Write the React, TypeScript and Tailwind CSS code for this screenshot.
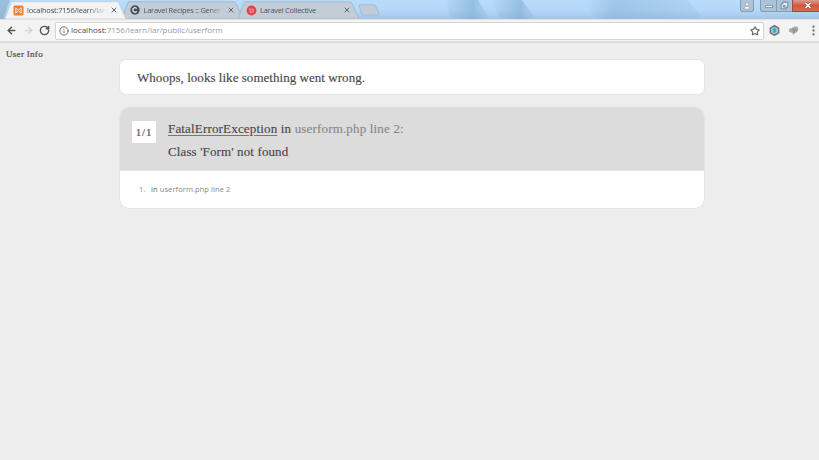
import React from "react";
import { Star, X, ArrowLeft, ArrowRight, RotateCw, Info, EllipsisVertical } from "lucide-react";

const sans = "font-['Open_Sans','Noto_Sans',sans-serif]";
const serif = "font-['Liberation_Serif',serif]";

type TabProps = {
  title: string;
  icon: React.ReactNode;
  shape: string;
  edge: string;
  text: string;
};

function Tab({ title, icon, shape, edge, text }: TabProps) {
  return (
    <div className={"relative flex h-[18px] w-[121px] shrink-0 items-center pl-[7px] " + shape}>
      <svg className="absolute inset-0 h-full w-full" viewBox="0 0 121 18" preserveAspectRatio="none">
        <path d="M0 18 L6 1.6 Q6.5 .8 7.5 .8 H112 Q113 .8 113.5 1.6 L121 18 Z" className={edge} strokeWidth=".6" />
      </svg>
      <div className="relative ml-[1px] flex h-[11px] w-[11px] items-center justify-center">{icon}</div>
      <span className={"relative ml-[3px] w-[80px] whitespace-nowrap text-[7.5px] leading-[15px] " + text}>
        {title}
      </span>
      <X className="relative ml-[3px] h-[8px] w-[8px] shrink-0 text-[#60666d]" strokeWidth={3} />
    </div>
  );
}

function WindowButtons() {
  return (
    <div className="ml-auto flex h-[12px] text-[#fff]">
      <div className="mr-[6px] flex w-[14px] items-center justify-center rounded-b-[3px] border border-t-0 border-[#849bb1] bg-[#adc4d9]">
        <svg width="8" height="8" viewBox="0 0 8 8" fill="#fff" stroke="#71879b" strokeWidth=".5">
          <circle cx="4" cy="2.3" r="1.6" />
          <path d="M1 7 Q1 4.2 4 4.2 Q7 4.2 7 7 Z" />
        </svg>
      </div>
      <div className="flex w-[17px] items-center justify-center rounded-bl-[3px] border border-t-0 border-[#849bb1] bg-[#abc3d8]">
        <span className="mt-[2px] h-[3px] w-[8px] border border-[#8799aa] bg-white" />
      </div>
      <div className="flex w-[15px] items-center justify-center border-b border-[#849bb1] bg-[#abc3d8]">
        <svg width="9" height="9" viewBox="0 0 8 8" fill="none">
          <path d="M2.5 1 H7 V5.5 H5.5 V7 H1 V2.5 H2.5 Z" fill="#e9eff5" stroke="#657788" strokeWidth=".8" />
          <path d="M3 4 H4.5 V5.5 H3 Z" stroke="#657788" strokeWidth=".8" />
        </svg>
      </div>
      <div className="flex w-[27px] items-center justify-center border-b border-l border-[#9d4b48] bg-gradient-to-b from-[#dc9a8e] via-[#d0573f] to-[#d76c52] pl-[3px]">
        <svg width="8" height="7" viewBox="0 0 8 7">
          <path d="M1.5 1 L6.5 6 M6.5 1 L1.5 6" stroke="#783f3e" strokeWidth="2.8" />
          <path d="M1.5 1 L6.5 6 M6.5 1 L1.5 6" stroke="#fff" strokeWidth="1.6" />
        </svg>
      </div>
    </div>
  );
}

function TabStrip() {
  return (
    <header className="relative flex h-[19px] bg-gradient-to-b from-[#b9dcfb] via-[#b4d8f8] to-[#a6c5e7] pl-[5px]">
      <svg className="absolute inset-0" width="819" height="19" viewBox="0 0 819 19">
        <defs>
          <linearGradient id="streak">
            <stop offset="0" stopColor="#78a8cb" stopOpacity="0" />
            <stop offset=".65" stopColor="#78a8cb" stopOpacity=".55" />
            <stop offset="1" stopColor="#78a8cb" stopOpacity=".05" />
          </linearGradient>
          <linearGradient id="sheen">
            <stop offset="0" stopColor="#78a8cb" stopOpacity="0" />
            <stop offset=".25" stopColor="#78a8cb" stopOpacity=".4" />
            <stop offset="1" stopColor="#78a8cb" stopOpacity=".12" />
          </linearGradient>
        </defs>
        <path d="M442 0 H478 L490 19 H452 Z" fill="url(#streak)" />
        <path d="M490 0 H522 L536 19 H500 Z" fill="url(#streak)" />
        <path d="M585 0 H688 L703 19 H595 Z" fill="url(#sheen)" />
        <path d="M0 0 H10 L3 19 H0 Z" fill="#799bb6" opacity=".45" />
      </svg>
      <div className="relative flex items-end">
        <Tab
          title="localhost:7156/learn/lar"
          shape="z-10"
          edge="fill-[#f3f3f3] stroke-[#bdc8d4]"
          text="text-[#4f4f4f] tracking-[-0.22px] mask-r-from-75%"
          icon={
            <svg width="11" height="11" viewBox="0 0 11 11">
              <rect x=".5" y=".5" width="10" height="10" rx="1.5" fill="#ef7d38" />
              <path d="M2.6 2.7 L5.2 5.3 L8.3 2.7 M2.6 8.4 L5.2 5.6 L8.3 8.4 M2.8 3 V8 M8.2 3 V8" stroke="#fff0e5" strokeWidth=".9" fill="none" />
            </svg>
          }
        />
        <Tab
          title="Laravel Recipes :: Gener"
          shape="-ml-[4.5px]"
          edge="fill-[#c2cdd8] stroke-[#98a8b8]"
          text="text-[#4b545f] tracking-[-0.25px] mask-r-from-80%"
          icon={
            <svg width="10" height="10" viewBox="0 0 10 10">
              <circle cx="5" cy="5" r="4.7" fill="#46515b" />
              <path d="M6.8 3.5 L5 2.4 L3 3.6 V6.2 L5 7.5 L6.8 6.4" stroke="#dce4ea" strokeWidth="1.3" fill="none" />
            </svg>
          }
        />
        <Tab
          title="Laravel Collective"
          shape="-ml-[4.5px]"
          edge="fill-[#c2cdd8] stroke-[#98a8b8]"
          text="text-[#4b545f] tracking-[-0.25px]"
          icon={
            <svg width="11" height="11" viewBox="0 0 11 11">
              <circle cx="5.5" cy="5.5" r="4.9" fill="#df454d" />
              <path d="M4 3 V7.2 H7.2 V4.2 H5.2" stroke="#f5a5a8" strokeWidth="1" fill="none" />
            </svg>
          }
        />
        <svg className="-ml-[1px] mb-[3px]" width="23" height="12" viewBox="0 0 23 12">
          <path d="M1 1.5 Q1 .8 2 .8 H16 Q17 .8 17.5 1.8 L21 10 Q21 11 20 11 H6 Q4.5 11 4 10 Z" fill="#c0ccda" stroke="#a1b2c5" strokeWidth=".8" />
        </svg>
      </div>
      <div className="relative ml-auto">
        <WindowButtons />
      </div>
    </header>
  );
}

function Toolbar() {
  return (
    <nav className="flex h-[24px] items-center border-b-2 border-t border-b-[#dcdcdc] border-t-[#e2e2e2] bg-[#f3f3f3] pl-[6px]">
      <ArrowLeft className="h-[11px] w-[11px] shrink-0 text-[#555]" strokeWidth={3.2} />
      <ArrowRight className="ml-[6px] h-[11px] w-[11px] shrink-0 text-[#d5d5d5]" strokeWidth={3} />
      <RotateCw className="ml-[5px] h-[11px] w-[11px] shrink-0 text-[#555]" strokeWidth={3.2} />
      <div className="ml-[5px] flex h-[18px] w-[709px] shrink-0 items-center rounded-[2px] border border-[#d4d4d4] bg-white pl-[3px]">
        <Info className="h-[10px] w-[10px] text-[#666]" strokeWidth={2.3} />
        <span className="mb-[1px] ml-[2px] whitespace-nowrap text-[8px] leading-[14px] text-[#999]">
          <span className="text-[#4b4b4b]">localhost:</span>7156/learn/lar/public/userform
        </span>
        <Star className="ml-auto mr-[3px] h-[10px] w-[10px] text-[#666]" strokeWidth={2.8} />
      </div>
      <svg className="ml-[5px] shrink-0" width="11" height="11" viewBox="0 0 11 11">
        <path d="M5.5 .8 L9.6 3.1 V7.9 L5.5 10.2 L1.4 7.9 V3.1 Z" fill="#c9d3d6" stroke="#6c7377" strokeWidth="1.6" />
        <path d="M5.5 2.5 V8.3 M4.2 4.2 H6.8 V6.8 H4.2 Z" stroke="#2eaed1" strokeWidth="1.2" fill="#76c6da" />
      </svg>
      <svg className="ml-[8px] shrink-0" width="11" height="11" viewBox="0 0 12 11">
        <path d="M1 5 Q1 2.5 4 3 Q6 .5 9 1.2 Q12 2 11 5 Q10.5 8 7.5 8.5 L6 10 L4.5 8 Q1 8 1 5 Z" fill="#a8a8a8" />
        <path d="M4.5 4 L7 5.5 L6.5 8 M7 5.5 L9.5 3.5" stroke="#7c7c7c" strokeWidth="1" fill="none" />
      </svg>
      <EllipsisVertical className="ml-[8px] h-[13px] w-[13px] shrink-0 text-[#6b6b6b]" strokeWidth={2.2} />
    </nav>
  );
}

export default function App() {
  return (
    <div className={"flex h-[460px] w-[819px] flex-col overflow-hidden bg-[#ededed] " + sans}>
      <TabStrip />
      <Toolbar />
      <main className={"flex grow flex-col text-[#484848] " + serif}>
        <p className="ml-[6px] mt-[6px] h-[10px] whitespace-nowrap text-[9px] leading-[11px] tracking-[0.3px] [-webkit-text-stroke:0.2px]">User Info</p>
        <h1 className="ml-[119px] flex h-[36px] w-[586px] items-center whitespace-nowrap rounded-[7px] border border-[#e4e4e4] bg-white pl-[17px] pt-[1px] text-[13px] tracking-[0.04px] [-webkit-text-stroke:0.15px]">
          Whoops, looks like something went wrong.
        </h1>
        <section className="ml-[119px] mt-[12px] h-[102px] w-[586px] overflow-hidden rounded-[10px] border border-[#e4e4e4] border-t-[#dcdcdc] bg-white">
          <div className="flex h-[63px] border-b border-[#e8e8e8] bg-[#dcdcdc] pl-[12px]">
            <span className="mt-[13px] flex h-[22px] w-[24px] items-center justify-center bg-white pt-[1px] text-[11px] tracking-[0.8px] text-[#4b5560] [-webkit-text-stroke:0.2px]">1/1</span>
            <h2 className="ml-[12px] mt-[9px] whitespace-nowrap text-[13px] leading-[23px] [-webkit-text-stroke:0.15px]">
              <div className="tracking-[0.17px]">
                <span className="underline decoration-[#777] underline-offset-2">FatalErrorException</span> in{" "}
                <span className="text-[#888]">userform.php line 2:</span>
              </div>
              <div className="tracking-[0.12px]">Class 'Form' not found</div>
            </h2>
          </div>
          <ol className={"flex pl-[19px] pt-[12px] text-[7.5px] leading-[13px] text-[#888] " + sans}>
            <li className="flex whitespace-nowrap">
              <span className="w-[12px]">1.</span>
              <span className="tracking-[0.09px]"><span className="text-[#666]">in</span> userform.php line 2</span>
            </li>
          </ol>
        </section>
      </main>
    </div>
  );
}
